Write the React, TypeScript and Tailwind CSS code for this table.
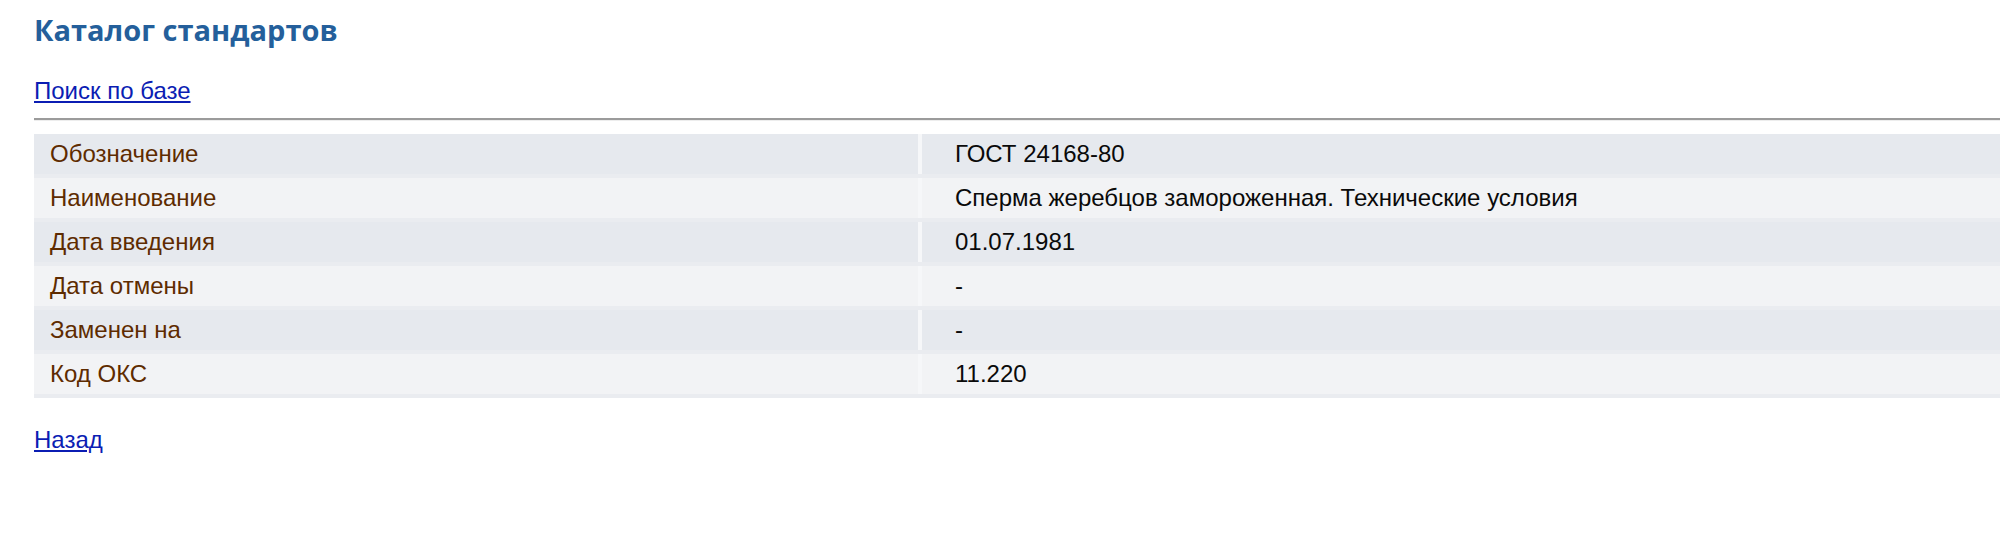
const rows: { label: string; value: string }[] = [
  { label: 'Обозначение', value: 'ГОСТ 24168-80' },
  { label: 'Наименование', value: 'Сперма жеребцов замороженная. Технические условия' },
  { label: 'Дата введения', value: '01.07.1981' },
  { label: 'Дата отмены', value: '-' },
  { label: 'Заменен на', value: '-' },
  { label: 'Код ОКС', value: '11.220' },
];

export default function App() {
  return (
    <div className="min-h-[558px] bg-white pl-[34px] font-['Liberation_Sans',Arial,sans-serif]">
      {/* Header */}
      <h1 className="pt-[13px] text-[29px] leading-[34px] font-bold text-[#245f9b] font-['Open_Sans',sans-serif]">
        Каталог стандартов
      </h1>

      <div className="mt-[31px] text-[24px] leading-[26px]">
        <a href="#" className="text-[#0b1db3] underline">
          Поиск по базе
        </a>
      </div>

      <div className="mt-[14px] border-t-2 border-b border-t-[#9b9b9b] border-b-[#ededed]" />

      {/* Details table */}
      <div className="mt-[13px] flex flex-col text-[24px] leading-[26px]">
        {rows.map((row, i) => (
          <div
            key={row.label}
            className={`flex h-[44px] border-b-4 border-[#eaecf0] ${
              i % 2 === 0 ? 'bg-[#e6e9ee]' : 'bg-[#f2f3f5]'
            }`}
          >
            <div className="flex w-[888px] shrink-0 items-center border-r-4 border-[#f6f7f9] pl-[16px] text-[#5e2b00]">
              {row.label}
            </div>
            <div className="flex flex-1 items-center pl-[33px] text-[#0a0a0a]">{row.value}</div>
          </div>
        ))}
      </div>

      <div className="mt-[29px] text-[24px] leading-[26px]">
        <a href="#" className="text-[#0b1db3] underline">
          Назад
        </a>
      </div>
    </div>
  );
}
